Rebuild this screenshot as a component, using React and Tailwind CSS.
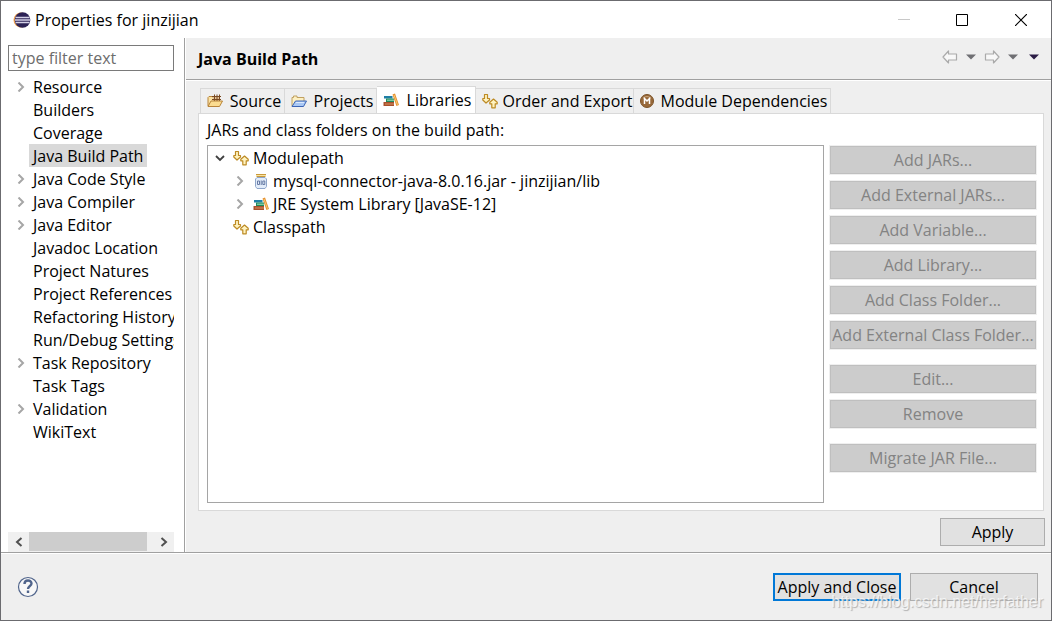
import { useState } from "react"

const pages = [
    { name: "Resource", expandable: true },
    { name: "Builders" },
    { name: "Coverage" },
    { name: "Java Build Path" },
    { name: "Java Code Style", expandable: true },
    { name: "Java Compiler", expandable: true },
    { name: "Java Editor", expandable: true },
    { name: "Javadoc Location" },
    { name: "Project Natures" },
    { name: "Project References" },
    { name: "Refactoring History" },
    { name: "Run/Debug Settings" },
    { name: "Task Repository", expandable: true },
    { name: "Task Tags" },
    { name: "Validation", expandable: true },
    { name: "WikiText" },
]

const actionGroups = [
    [
        "Add JARs...",
        "Add External JARs...",
        "Add Variable...",
        "Add Library...",
        "Add Class Folder...",
        "Add External Class Folder...",
    ],
    ["Edit...", "Remove"],
    ["Migrate JAR File..."],
]

function EclipseIcon() {
    return (
        <svg width="18" height="18" viewBox="0 0 18 18">
            <circle cx="8" cy="9" r="7.500" fill="#f0a04b" />
            <circle cx="9.500" cy="9" r="7.800" fill="#2c2255" />
            <path d="M2.500 6.500h14M2 9h15.500M2.500 11.500h14" stroke="#d3d0e6" strokeWidth="1.400" />
        </svg>
    )
}

function Chevron({ open }) {
    return (
        <svg width="10" height="10" viewBox="0 0 10 10" fill="none">
            {open ? (
                <path d="M1 3l4 4 4-4" stroke="#404040" strokeWidth="1.800" />
            ) : (
                <path d="M2.500 0.500l4.500 4.500-4.500 4.500" stroke="#a6a6a6" strokeWidth="2" />
            )}
        </svg>
    )
}

function ScrollArrow({ left }) {
    return (
        <svg width="8" height="10" viewBox="0 0 8 10" fill="none" stroke="#505050" strokeWidth="2">
            <path d={left ? "M6.500 1l-4.500 4 4.500 4" : "M1.500 1l4.500 4-4.500 4"} />
        </svg>
    )
}

function SourceIcon() {
    return (
        <svg width="16" height="14" viewBox="0 0 16 14">
            <path d="M1 12V3.500l1-1h3l1 1h6V6" fill="#fbe3a4" stroke="#b8843a" />
            <path d="M6 2h7v5H6z" fill="#e2c194" />
            <path d="M5 2.500h9M5 5.500h9M7.500 0.500V7M10 0.500V7M12.500 0.500V7" stroke="#7a4a22" />
            <path d="M1 12.500l3-5.500h11.500l-3 5.500z" fill="#fbdc90" stroke="#b8843a" strokeLinejoin="round" />
        </svg>
    )
}

function ProjectsIcon() {
    return (
        <svg width="16" height="14" viewBox="0 0 16 14">
            <path d="M1 12V3.500h1.500V2H6v1.500h7V7" fill="#fdf0c2" stroke="#c0a060" />
            <path d="M1 12.500L4.500 7h11l-3 5.500z" fill="#a9c8f5" stroke="#3c64b4" strokeLinejoin="round" />
            <path d="M5 8.500h8" stroke="#dce9fc" />
        </svg>
    )
}

function BooksIcon() {
    return (
        <svg width="16" height="14" viewBox="0 0 16 14">
            <path d="M1 3h8.500v2.500H1z" fill="#1f7fa6" />
            <path d="M3 5.500h8V9H3z" fill="#1f8a5c" />
            <path d="M4 6.500h7V8H4z" fill="#7cc6a0" />
            <path d="M0.500 9H11v4H0.500z" fill="#a9502c" />
            <path d="M2 10.200h9v1.600H2z" fill="#c4784e" />
            <path d="M9.500 1.500l2.500-1L16 12l-2.600 1z" fill="#e5912e" />
            <path d="M11 2l3.500 9.800" stroke="#f8c878" />
        </svg>
    )
}

function PathIcon() {
    return (
        <svg width="16" height="16" viewBox="0 0 16 16" fill="#fff3c0" stroke="#bd8b25" strokeWidth="1.200" strokeLinejoin="round">
            <path d="M2.500 1.500h3v4h2V7L4 10 0.800 7V5.500h1.700z" />
            <path d="M11.500 6l3.700 3.200v1.600h-2v4h-3.400v-4h-2V9.200z" />
        </svg>
    )
}

function JarIcon() {
    return (
        <svg width="14" height="16" viewBox="0 0 14 16">
            <path d="M3 4.500h8l1.500 1.500v7.500l-1.500 2H3l-1.500-2V6z" fill="#e2ecf9" stroke="#8fa6ca" />
            <path d="M2 1.500h10M2.500 3.500h9" stroke="#c99a3c" />
            <path d="M2 2.500h10" stroke="#f9e3a0" />
            <path d="M3.500 8H5.500v3.500H3.500zM8.800 8h2v3.500h-2zM7.200 7.500V12" fill="none" stroke="#5b6f9c" strokeWidth="0.900" />
        </svg>
    )
}

function ModuleIcon() {
    return (
        <svg width="14" height="14" viewBox="0 0 14 14">
            <circle cx="7" cy="7" r="6.500" fill="#98693a" stroke="#7d5328" />
            <path d="M3 4.500A5 5 0 0 1 11 4.500" stroke="#c8a47c" fill="none" />
            <path d="M4.500 10V4.500L7 7l2.500-2.500V10" stroke="#fff" strokeWidth="1.500" fill="none" />
        </svg>
    )
}

function NavArrow({ right }) {
    return (
        <svg width="16" height="14" viewBox="0 0 16 14" fill="#f8f8f8" stroke="#aaaaaa" strokeWidth="1.200" strokeLinejoin="round">
            <path d={right ? "M15 7L9.500 1v3H1.500v6h8v3z" : "M1 7l5.500-6v3h8v6h-8v3z"} />
        </svg>
    )
}

function Caret({ color }) {
    return (
        <svg width="10" height="6" viewBox="0 0 10 6">
            <path d="M0 0.500h10L5 5.500z" fill={color} />
        </svg>
    )
}

const tabs = [
    { name: "Source", icon: <SourceIcon />, width: "w-[85px]" },
    { name: "Projects", icon: <ProjectsIcon />, width: "w-[92px]" },
    { name: "Libraries", icon: <BooksIcon />, width: "w-[99px]" },
    { name: "Order and Export", icon: <PathIcon />, width: "w-[158px]" },
    { name: "Module Dependencies", icon: <ModuleIcon />, width: "w-[197px]" },
]

function TitleBar() {
    return (
        <header className="flex h-[37px] shrink-0 items-center bg-white pl-3">
            <EclipseIcon />
            <h1 className="ml-1 flex-1">Properties for jinzijian</h1>
            <button aria-label="Minimize" disabled className="flex h-full w-[58px] items-center justify-center">
                <svg width="12" height="12" viewBox="0 0 12 12">
                    <path d="M0 5.500h12" stroke="#c8c8c8" />
                </svg>
            </button>
            <button aria-label="Maximize" className="flex h-full w-[58px] items-center justify-center">
                <svg width="12" height="12" viewBox="0 0 12 12">
                    <path d="M0.500 0.500h11v11H0.500z" fill="none" stroke="#000" />
                </svg>
            </button>
            <button aria-label="Close" className="flex h-full w-[60px] items-center justify-center">
                <svg width="12" height="12" viewBox="0 0 12 12">
                    <path d="M0 0l12 12M12 0L0 12" stroke="#000" strokeWidth="1.200" />
                </svg>
            </button>
        </header>
    )
}

function Sidebar({ selected, onSelect }) {
    return (
        <aside className="flex w-[184px] shrink-0 flex-col border-r border-[#a0a0a0] bg-white pt-[7px] pr-[10px] pl-[7px]">
            <input
                aria-label="type filter text"
                placeholder="type filter text"
                className="mb-1 h-[26px] w-full shrink-0 border border-[#7a7a7a] px-[3px] placeholder:text-[#6d6d6d]"
            />
            <ul className="flex-1 overflow-hidden">
                {pages.map((page) => (
                    <li key={page.name} className="flex h-[23px] items-center">
                        <span className="flex w-[21px] shrink-0 justify-center pl-[5px]">
                            {page.expandable && <Chevron />}
                        </span>
                        <button
                            onClick={() => onSelect(page.name)}
                            className={`h-full px-1 whitespace-nowrap ${selected === page.name ? "bg-[#d9d9d9]" : ""}`}
                        >
                            {page.name}
                        </button>
                    </li>
                ))}
            </ul>
            <div className="flex h-5 shrink-0 bg-[#f0f0f0]">
                <button aria-label="Scroll left" className="flex w-[21px] items-center justify-center">
                    <ScrollArrow left />
                </button>
                <div className="mb-px w-[118px] bg-[#cdcdcd]" />
                <button aria-label="Scroll right" className="ml-auto flex w-[21px] items-center justify-center">
                    <ScrollArrow />
                </button>
            </div>
        </aside>
    )
}

function LibraryTree() {
    return (
        <ul className="flex-1 border border-[#a5a5a5] bg-white pl-[7px]">
            <li>
                <div className="flex h-[23px] items-center">
                    <Chevron open />
                    <span className="mr-1 ml-2">
                        <PathIcon />
                    </span>
                    Modulepath
                </div>
                <ul className="pl-5">
                    <li className="flex h-[23px] items-center">
                        <Chevron />
                        <span className="mr-1 ml-2 flex w-4 justify-center">
                            <JarIcon />
                        </span>
                        mysql-connector-java-8.0.16.jar - jinzijian/lib
                    </li>
                    <li className="flex h-[23px] items-center">
                        <Chevron />
                        <span className="mr-1 ml-2">
                            <BooksIcon />
                        </span>
                        JRE System Library [JavaSE-12]
                    </li>
                </ul>
            </li>
            <li className="flex h-[23px] items-center pl-[18px]">
                <span className="mr-1">
                    <PathIcon />
                </span>
                Classpath
            </li>
        </ul>
    )
}

export default function App() {
    const [selected, setSelected] = useState("Java Build Path")
    const [activeTab, setActiveTab] = useState("Libraries")

    return (
        <div className="relative flex min-h-screen flex-col border border-[#6b6b6f] bg-[#efefef] font-['Open_Sans','Noto_Sans',sans-serif] text-[16px] leading-5 text-black">
            <TitleBar />

            <div className="flex flex-1">
                <Sidebar selected={selected} onSelect={setSelected} />

                <main className="flex min-w-0 flex-1 flex-col border-l border-white">
                    <div className="flex h-[42px] shrink-0 items-center border-b border-[#a0a0a0] pr-3 pl-3">
                        <h2 className="flex-1 font-bold">Java Build Path</h2>
                        <div className="mb-1 flex items-center">
                            <button aria-label="Back" disabled>
                                <NavArrow />
                            </button>
                            <button aria-label="Back history" className="ml-2">
                                <Caret color="#6f6f73" />
                            </button>
                            <button aria-label="Forward" disabled className="ml-2">
                                <NavArrow right />
                            </button>
                            <button aria-label="Forward history" className="ml-2">
                                <Caret color="#6f6f73" />
                            </button>
                            <button aria-label="View menu" className="ml-[11px]">
                                <Caret color="#2b1c45" />
                            </button>
                        </div>
                    </div>

                    <div className="flex flex-1 flex-col border-t border-white pt-[5px] pr-[7px] pb-[6px] pl-3">
                        <div role="tablist" className="flex h-[27px] shrink-0 items-end pl-[2px]">
                            {tabs.map((tab, i) => (
                                <button
                                    key={tab.name}
                                    role="tab"
                                    aria-selected={activeTab === tab.name}
                                    onClick={() => setActiveTab(tab.name)}
                                    className={`flex items-center gap-1 border-t border-r border-[#d9d9d9] pl-[6px] whitespace-nowrap ${tab.width} ${i === 0 ? "border-l" : ""} ${
                                        activeTab === tab.name ? "-mb-px h-7 bg-white pb-px" : "h-[25px]"
                                    }`}
                                >
                                    <span className="shrink-0">{tab.icon}</span>
                                    <span className="flex-1 text-center">{tab.name}</span>
                                </button>
                            ))}
                        </div>

                        <section className="flex flex-1 flex-col border border-[#d9d9d9] bg-white pt-[6px] pr-[6px] pb-[7px] pl-2">
                            <p className="mb-[5px]">JARs and class folders on the build path:</p>
                            <div className="flex flex-1">
                                <LibraryTree />
                                <div className="ml-[5px] flex w-[208px] flex-col gap-[14px]">
                                    {actionGroups.map((group) => (
                                        <div key={group[0]} className="flex flex-col gap-[5px]">
                                            {group.map((label) => (
                                                <button
                                                    key={label}
                                                    disabled
                                                    className="h-[30px] border border-[#efefef] bg-[#cccccc] whitespace-nowrap text-[#838383] inset-ring inset-ring-[#bfbfbf]"
                                                >
                                                    {label}
                                                </button>
                                            ))}
                                        </div>
                                    ))}
                                </div>
                            </div>
                        </section>

                        <button className="-mr-px mt-[7px] h-7 w-[105px] shrink-0 self-end border border-[#adadad] bg-[#e1e1e1]">
                            Apply
                        </button>
                    </div>
                </main>
            </div>

            <footer className="flex h-[68px] shrink-0 items-center gap-[9px] border-t border-[#a0a0a0] pr-[13px] pl-4 shadow-[inset_0_1px_0_#ffffff]">
                <button aria-label="Help" className="mr-auto">
                    <svg width="22" height="22" viewBox="0 0 22 22" fill="none" stroke="#51658c">
                        <circle cx="11" cy="11" r="9.500" fill="#f8f8f8" strokeWidth="1.200" />
                        <path d="M7.500 8c0-4.500 7-4.500 7-0.500 0 2.500-3.500 2.500-3.500 5.500" strokeWidth="2.400" />
                        <path d="M11 14.500v2.500" strokeWidth="2.400" />
                    </svg>
                </button>
                <button className="h-7 w-32 border-2 border-[#0078d7] bg-[#e1e1e1] whitespace-nowrap">
                    Apply and Close
                </button>
                <button className="h-7 w-32 border border-[#adadad] bg-[#e1e1e1]">Cancel</button>
            </footer>

            <p className="pointer-events-none absolute right-2 bottom-2 font-['Liberation_Sans',sans-serif] text-[16px] text-white/70 [text-shadow:1px_1px_1px_#b0b0b0]">
                https://blog.csdn.net/herfather
            </p>
        </div>
    )
}
